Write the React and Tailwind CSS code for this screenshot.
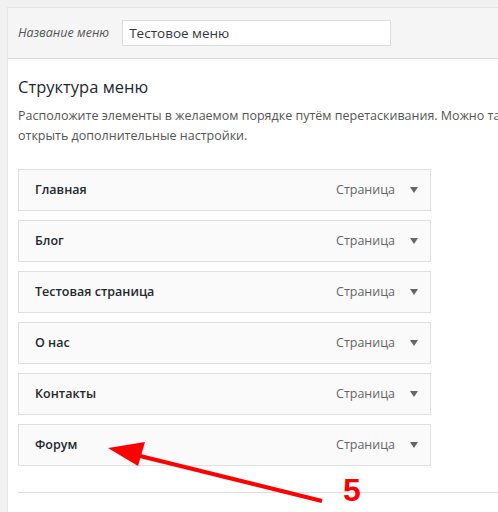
import React from "react";

const items = ["Главная", "Блог", "Тестовая страница", "О нас", "Контакты", "Форум"];

function MenuItem({ title }) {
  return (
    <div className="w-[413px] h-[42px] mb-[9px] bg-[#fafafa] border border-[#dfdfdf] flex items-center pl-[16px] pr-[12px]">
      <span className="flex-1 text-[12.5px] font-semibold text-[#23282d]">{title}</span>
      <span className="text-[12.5px] text-[#666]">Страница</span>
      <span className="ml-[15px] w-0 h-0 border-l-[4px] border-r-[4px] border-t-[6px] border-l-transparent border-r-transparent border-t-[#666]" />
    </div>
  );
}

export default function App() {
  return (
    <div
      className="relative w-[498px] h-[512px] overflow-hidden bg-[#f1f1f1] pt-[7px] pl-[7px]"
      style={{ fontFamily: '"Open Sans", "Noto Sans", sans-serif' }}
    >
      <div className="w-[900px] h-[600px] bg-white border-l border-t border-[#e5e5e5]">
        {/* header */}
        <div className="h-[51px] bg-[#f5f5f5] border-b border-[#dddddd] flex items-center pl-[10px]">
          <label className="text-[12.5px] italic text-[#555]">Название меню</label>
          <div className="ml-[13px] w-[269px] h-[26px] bg-white border border-[#dddddd] flex items-center px-[6px] text-[13.5px] text-[#32373c]">
            Тестовое меню
          </div>
        </div>

        {/* body */}
        <div className="px-[10px] pt-[16px]">
          <h3 className="text-[16.5px] text-[#23282d] leading-[24px]">Структура меню</h3>
          <p className="mt-[7px] text-[12.5px] leading-[20px] text-[#555]">
            <span className="whitespace-nowrap">
              Расположите элементы в желаемом порядке путём перетаскивания. Можно также щёлкнуть на стрелке справа от элемента, чтобы
            </span>
            <br />
            открыть дополнительные настройки.
          </p>
          <div className="mt-[23px]">
            {items.map((t) => (
              <MenuItem key={t} title={t} />
            ))}
          </div>
          <div className="mt-[26px] border-t border-[#dddddd]" />
        </div>
      </div>

      {/* annotation */}
      <svg className="absolute left-0 top-0" width="498" height="512">
        <line x1="128" y1="453" x2="322" y2="501" stroke="#ff0000" strokeWidth="4" />
        <polygon points="108,448 145,442 138,466" fill="#ff0000" />
      </svg>
      <span
        className="absolute left-[343px] top-[474px] text-[32px] font-bold text-[#ff0000] leading-none"
        style={{ fontFamily: '"Liberation Sans", Arial, sans-serif' }}
      >
        5
      </span>
    </div>
  );
}
